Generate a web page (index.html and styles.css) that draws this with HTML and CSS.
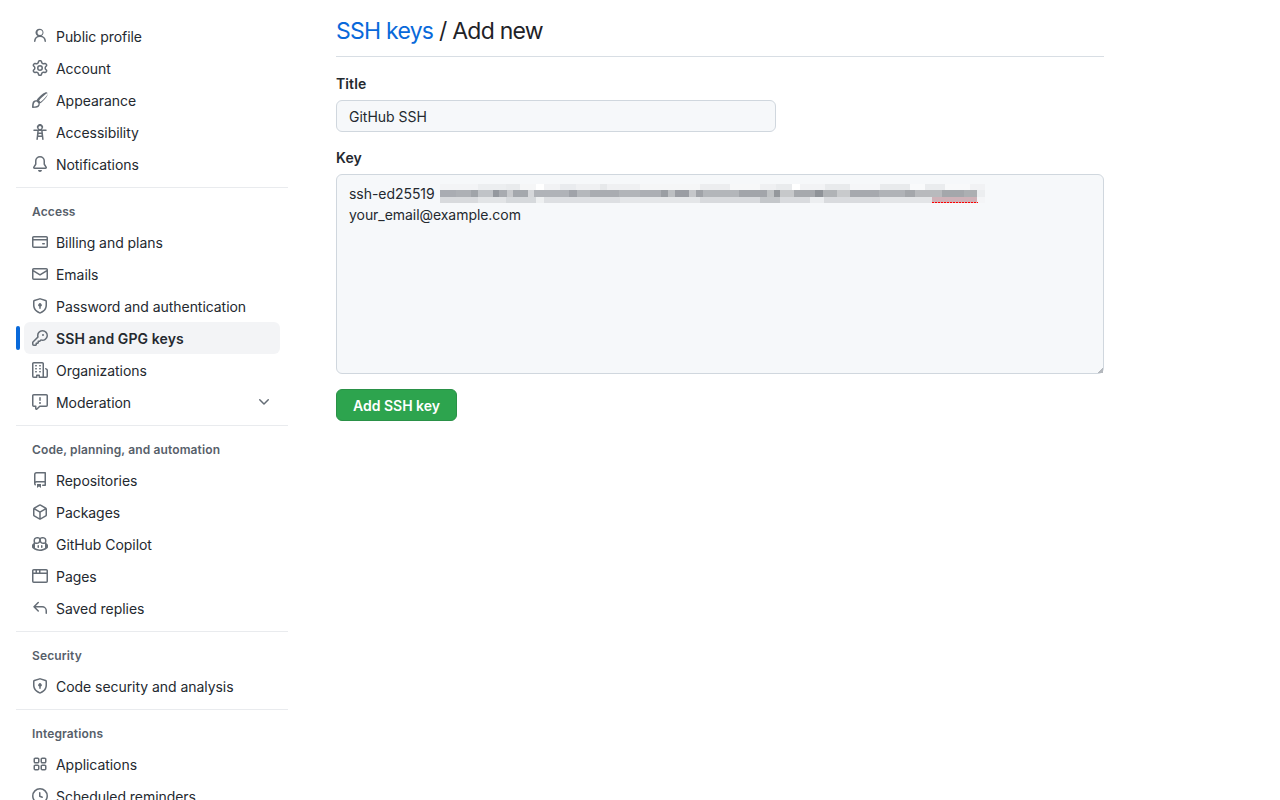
FILE: index.html
```html
<!DOCTYPE html>
<html lang="en">
<head>
<meta charset="utf-8">
<title>Add new SSH key</title>
<link rel="stylesheet" href="styles.css">
</head>
<body>
<nav class="sidebar">
  <ul class="group">
    <li class="item"><svg class="icon" viewBox="0 0 16 16"><path d="M10.561 8.073a6.005 6.005 0 0 1 3.432 5.142.75.75 0 1 1-1.498.07 4.5 4.5 0 0 0-8.99 0 .75.75 0 0 1-1.498-.07 6.004 6.004 0 0 1 3.431-5.142 3.999 3.999 0 1 1 4.123 0ZM10.5 4.5a2.5 2.5 0 1 0-5 0 2.5 2.5 0 0 0 5 0Z"/></svg>Public profile</li>
    <li class="item"><svg class="icon" viewBox="0 0 16 16"><path d="M8 0a8.2 8.2 0 0 1 .701.031C9.444.095 9.99.645 10.16 1.29l.288 1.107c.018.066.079.158.212.224.231.114.454.243.668.386.123.082.233.09.299.071l1.103-.303c.644-.176 1.392.021 1.82.63.27.385.506.792.704 1.218.315.675.111 1.422-.364 1.891l-.814.806c-.049.048-.098.147-.088.294.016.257.016.515 0 .772-.01.147.038.246.088.294l.814.806c.475.469.679 1.216.364 1.891a7.977 7.977 0 0 1-.704 1.217c-.428.61-1.176.807-1.82.63l-1.102-.302c-.067-.019-.177-.011-.3.071a5.909 5.909 0 0 1-.668.386c-.133.066-.194.158-.211.224l-.29 1.106c-.168.646-.715 1.196-1.458 1.26a8.006 8.006 0 0 1-1.402 0c-.743-.064-1.289-.614-1.458-1.26l-.289-1.106c-.018-.066-.079-.158-.212-.224a5.738 5.738 0 0 1-.668-.386c-.123-.082-.233-.09-.299-.071l-1.103.303c-.644.176-1.392-.021-1.82-.63a8.12 8.12 0 0 1-.704-1.218c-.315-.675-.111-1.422.363-1.891l.815-.806c.05-.048.098-.147.088-.294a6.214 6.214 0 0 1 0-.772c.01-.147-.038-.246-.088-.294l-.815-.806C.635 6.045.431 5.298.746 4.623a7.92 7.92 0 0 1 .704-1.217c.428-.61 1.176-.807 1.82-.63l1.102.302c.067.019.177.011.3-.071.214-.143.437-.272.668-.386.133-.066.194-.158.211-.224l.29-1.106C6.009.645 6.556.095 7.299.03 7.53.01 7.764 0 8 0Zm-.571 1.525c-.036.003-.108.036-.137.146l-.289 1.105c-.147.561-.549.967-.998 1.189-.173.086-.34.183-.5.29-.417.278-.97.423-1.529.27l-1.103-.303c-.109-.03-.175.016-.195.045-.22.312-.412.644-.573.99-.014.031-.021.11.059.19l.815.806c.411.406.562.957.53 1.456a4.709 4.709 0 0 0 0 .582c.032.499-.119 1.05-.53 1.456l-.815.806c-.081.08-.073.159-.059.19.162.346.353.677.573.989.02.03.085.076.195.046l1.102-.303c.56-.153 1.113-.008 1.53.27.161.107.328.204.501.29.447.222.85.629.997 1.189l.289 1.105c.029.109.101.143.137.146a6.6 6.6 0 0 0 1.142 0c.036-.003.108-.036.137-.146l.289-1.105c.147-.561.549-.967.998-1.189.173-.086.34-.183.5-.29.417-.278.97-.423 1.529-.27l1.103.303c.109.029.175-.016.195-.045.22-.313.411-.644.573-.99.014-.031.021-.11-.059-.19l-.815-.806c-.411-.406-.562-.957-.53-1.456a4.709 4.709 0 0 0 0-.582c-.032-.499.119-1.05.53-1.456l.815-.806c.081-.08.073-.159.059-.19a6.464 6.464 0 0 0-.573-.989c-.02-.03-.085-.076-.195-.046l-1.102.303c-.56.153-1.113.008-1.53-.27a4.44 4.44 0 0 0-.501-.29c-.447-.222-.85-.629-.997-1.189l-.289-1.105c-.029-.11-.101-.143-.137-.146a6.6 6.6 0 0 0-1.142 0ZM11 8a3 3 0 1 1-6 0 3 3 0 0 1 6 0ZM9.5 8a1.5 1.5 0 1 0-3.001.001A1.5 1.5 0 0 0 9.5 8Z"/></svg>Account</li>
    <li class="item"><svg class="icon" viewBox="0 0 16 16"><path d="M11.134 1.535c.7-.509 1.416-.942 2.076-1.155.649-.21 1.463-.267 2.069.34.603.601.568 1.411.368 2.07-.202.668-.624 1.39-1.125 2.096-1.011 1.424-2.496 2.987-3.775 4.249-1.098 1.084-2.132 1.839-3.04 2.3a3.744 3.744 0 0 1-1.055 3.217c-.431.431-1.065.691-1.657.861-.614.177-1.294.287-1.914.357A21.151 21.151 0 0 1 .797 16H.743l.007-.75H.749L.742 16a.75.75 0 0 1-.743-.742l.743-.008-.742.007v-.054a21.25 21.25 0 0 1 .13-2.284c.067-.647.187-1.287.358-1.914.17-.591.43-1.226.86-1.657a3.746 3.746 0 0 1 3.227-1.054c.466-.893 1.225-1.907 2.314-2.982 1.271-1.255 2.833-2.75 4.245-3.777ZM1.5 14.5c.5-.01 1.002-.04 1.5-.09.567-.064 1.156-.163 1.66-.31.525-.152.88-.33 1.068-.518a2.25 2.25 0 1 0-3.182-3.182c-.19.189-.368.544-.52 1.07-.147.503-.246 1.092-.31 1.66-.05.498-.08 1-.09 1.5Zm5.42-6.057c.6.318 1.2.92 1.482 1.478.79-.419 1.71-1.068 2.71-2.056 1.254-1.238 2.672-2.738 3.607-4.055.47-.66.78-1.22.916-1.669.138-.457.08-.61-.013-.703-.09-.09-.236-.148-.686-.001-.442.143-1 .47-1.657.947-1.3.946-2.792 2.367-4.046 3.605-.96.947-1.598 1.824-1.988 2.552-.12-.04.013-.024-.325-.098Z"/></svg>Appearance</li>
    <li class="item"><svg class="icon" viewBox="0 0 16 16"><path d="M9.923 5.302c.063.063.122.129.178.198H14A.75.75 0 0 1 14 7h-3.3l.578 5.163.362 2.997a.75.75 0 0 1-1.49.18L9.868 13H6.132l-.282 2.34a.75.75 0 0 1-1.49-.18l.362-2.997L5.3 7H2a.75.75 0 0 1 0-1.5h3.9a2.54 2.54 0 0 1 .176-.198 3 3 0 1 1 3.847 0ZM9.2 7.073h-2.4l-.175 1.45h2.75Zm.192 2.95H6.608l-.165 1.477h3.114ZM8 5a1.5 1.5 0 1 0 0-3 1.5 1.5 0 0 0 0 3Z"/></svg>Accessibility</li>
    <li class="item"><svg class="icon" viewBox="0 0 16 16"><path d="M8 16a2 2 0 0 0 1.985-1.75c.017-.137-.097-.25-.235-.25h-3.5c-.138 0-.252.113-.235.25A2 2 0 0 0 8 16ZM3 5a5 5 0 0 1 10 0v2.947c0 .05.015.098.042.139l1.703 2.555A1.519 1.519 0 0 1 13.482 13H2.518a1.516 1.516 0 0 1-1.263-2.36l1.703-2.554A.255.255 0 0 0 3 7.947Zm5-3.5A3.5 3.5 0 0 0 4.5 5v2.947c0 .346-.102.683-.294.97l-1.703 2.556a.017.017 0 0 0-.003.01l.001.006c0 .002.002.004.004.006l.006.004.007.001h10.964l.007-.001.006-.004.004-.006.001-.007a.017.017 0 0 0-.003-.01l-1.703-2.554a1.745 1.745 0 0 1-.294-.97V5A3.5 3.5 0 0 0 8 1.5Z"/></svg>Notifications</li>
  </ul>
  <div class="divider"></div>
  <h3 class="heading">Access</h3>
  <ul class="group">
    <li class="item"><svg class="icon" viewBox="0 0 16 16"><path d="M10.75 9a.75.75 0 0 0 0 1.5h1.5a.75.75 0 0 0 0-1.5h-1.5Z"/><path d="M0 3.75C0 2.784.784 2 1.75 2h12.5c.966 0 1.75.784 1.75 1.75v8.5A1.75 1.75 0 0 1 14.25 14H1.75A1.75 1.75 0 0 1 0 12.25ZM14.5 6.5h-13v5.75c0 .138.112.25.25.25h12.5a.25.25 0 0 0 .25-.25Zm0-2.75a.25.25 0 0 0-.25-.25H1.75a.25.25 0 0 0-.25.25V5h13Z"/></svg>Billing and plans</li>
    <li class="item"><svg class="icon" viewBox="0 0 16 16"><path d="M1.75 2h12.5c.966 0 1.75.784 1.75 1.75v8.5A1.75 1.75 0 0 1 14.25 14H1.75A1.75 1.75 0 0 1 0 12.25v-8.5C0 2.784.784 2 1.75 2ZM1.5 12.251c0 .138.112.25.25.25h12.5a.25.25 0 0 0 .25-.25V5.809L8.38 9.397a.75.75 0 0 1-.76 0L1.5 5.809v6.442Zm13-8.181v-.32a.25.25 0 0 0-.25-.25H1.75a.25.25 0 0 0-.25.25v.32L8 7.88Z"/></svg>Emails</li>
    <li class="item"><svg class="icon" viewBox="0 0 16 16"><path d="M7.467.133a1.748 1.748 0 0 1 1.066 0l5.25 1.68A1.75 1.75 0 0 1 15 3.48V7c0 1.566-.32 3.182-1.303 4.682-.983 1.498-2.585 2.813-5.032 3.855a1.697 1.697 0 0 1-1.33 0c-2.447-1.042-4.049-2.357-5.032-3.855C1.32 10.182 1 8.566 1 7V3.48a1.75 1.75 0 0 1 1.217-1.667Zm.61 1.429a.25.25 0 0 0-.153 0l-5.25 1.68a.25.25 0 0 0-.174.238V7c0 1.358.275 2.666 1.057 3.86.784 1.194 2.121 2.34 4.366 3.297a.196.196 0 0 0 .154 0c2.245-.956 3.582-2.104 4.366-3.298C13.225 9.666 13.5 8.36 13.5 7V3.48a.251.251 0 0 0-.174-.237l-5.25-1.68ZM8.75 8.582v1.668a.75.75 0 0 1-1.5 0V8.582a1.75 1.75 0 1 1 1.5 0Z"/></svg>Password and authentication</li>
    <li class="item active"><svg class="icon" viewBox="0 0 16 16"><path d="M10.5 0a5.499 5.499 0 1 1-1.288 10.848l-.932.932a.749.749 0 0 1-.53.22H7v.75a.749.749 0 0 1-.22.53l-.5.5a.749.749 0 0 1-.53.22H5v.75a.749.749 0 0 1-.22.53l-.5.5a.749.749 0 0 1-.53.22h-2A1.75 1.75 0 0 1 0 14.25v-2c0-.199.079-.389.22-.53l4.932-4.932A5.5 5.5 0 0 1 10.5 0Zm-4 5.5c-.001.431.069.86.205 1.269a.75.75 0 0 1-.181.768L1.5 12.56v1.69c0 .138.112.25.25.25h1.69l.06-.06v-1.19a.75.75 0 0 1 .75-.75h1.19l.06-.06v-1.19a.75.75 0 0 1 .75-.75h1.19l1.023-1.025a.75.75 0 0 1 .768-.18A4 4 0 1 0 6.5 5.5ZM11 6a1 1 0 1 1 0-2 1 1 0 0 1 0 2Z"/></svg>SSH and GPG keys</li>
    <li class="item"><svg class="icon" viewBox="0 0 16 16"><path d="M1.75 16A1.75 1.75 0 0 1 0 14.25V1.75C0 .784.784 0 1.75 0h8.5C11.216 0 12 .784 12 1.75v12.5c0 .085-.006.168-.018.25h2.268a.25.25 0 0 0 .25-.25V8.285a.25.25 0 0 0-.111-.208l-1.055-.703a.749.749 0 1 1 .832-1.248l1.055.703c.487.325.779.871.779 1.456v5.965A1.75 1.75 0 0 1 14.25 16h-3.5a.766.766 0 0 1-.197-.026c-.099.017-.2.026-.303.026h-3a.75.75 0 0 1-.75-.75V14h-1v1.25a.75.75 0 0 1-.75.75Zm-.25-1.75c0 .138.112.25.25.25H4v-1.25a.75.75 0 0 1 .75-.75h2.5a.75.75 0 0 1 .75.75v1.25h2.25a.25.25 0 0 0 .25-.25V1.75a.25.25 0 0 0-.25-.25h-8.5a.25.25 0 0 0-.25.25ZM3.75 6h.5a.75.75 0 0 1 0 1.5h-.5a.75.75 0 0 1 0-1.5ZM3 3.75A.75.75 0 0 1 3.75 3h.5a.75.75 0 0 1 0 1.5h-.5A.75.75 0 0 1 3 3.75Zm4 3A.75.75 0 0 1 7.75 6h.5a.75.75 0 0 1 0 1.5h-.5A.75.75 0 0 1 7 6.75ZM7.75 3h.5a.75.75 0 0 1 0 1.5h-.5a.75.75 0 0 1 0-1.5ZM3 9.75A.75.75 0 0 1 3.75 9h.5a.75.75 0 0 1 0 1.5h-.5A.75.75 0 0 1 3 9.75ZM7.75 9h.5a.75.75 0 0 1 0 1.5h-.5a.75.75 0 0 1 0-1.5Z"/></svg>Organizations</li>
    <li class="item"><svg class="icon" viewBox="0 0 16 16"><path d="M0 1.75C0 .784.784 0 1.75 0h12.5C15.216 0 16 .784 16 1.75v9.5A1.75 1.75 0 0 1 14.25 13H8.06l-2.573 2.573A1.458 1.458 0 0 1 3 14.543V13H1.75A1.75 1.75 0 0 1 0 11.25Zm1.75-.25a.25.25 0 0 0-.25.25v9.5c0 .138.112.25.25.25h2a.75.75 0 0 1 .75.75v2.19l2.72-2.72a.749.749 0 0 1 .53-.22h6.5a.25.25 0 0 0 .25-.25v-9.5a.25.25 0 0 0-.25-.25Zm7 2.25v2.5a.75.75 0 0 1-1.5 0v-2.5a.75.75 0 0 1 1.5 0ZM9 9a1 1 0 1 1-2 0 1 1 0 0 1 2 0Z"/></svg>Moderation<svg class="icon chevron" viewBox="0 0 16 16"><path d="M12.78 5.22a.749.749 0 0 1 0 1.06l-4.25 4.25a.749.749 0 0 1-1.06 0L3.22 6.28a.749.749 0 1 1 1.06-1.06L8 8.939l3.72-3.719a.749.749 0 0 1 1.06 0Z"/></svg></li>
  </ul>
  <div class="divider"></div>
  <h3 class="heading">Code, planning, and automation</h3>
  <ul class="group">
    <li class="item"><svg class="icon" viewBox="0 0 16 16"><path d="M2 2.5A2.5 2.5 0 0 1 4.5 0h8.75a.75.75 0 0 1 .75.75v12.5a.75.75 0 0 1-.75.75h-2.5a.75.75 0 0 1 0-1.5h1.75v-2h-8a1 1 0 0 0-.714 1.7.75.75 0 1 1-1.072 1.05A2.495 2.495 0 0 1 2 11.5Zm10.5-1h-8a1 1 0 0 0-1 1v6.708A2.486 2.486 0 0 1 4.5 9h8ZM5 12.25a.25.25 0 0 1 .25-.25h3.5a.25.25 0 0 1 .25.25v3.25a.25.25 0 0 1-.4.2l-1.45-1.087a.249.249 0 0 0-.3 0L5.4 15.7a.25.25 0 0 1-.4-.2Z"/></svg>Repositories</li>
    <li class="item"><svg class="icon" viewBox="0 0 16 16"><path d="m8.878.392 5.25 3.045c.54.314.872.89.872 1.514v6.098a1.75 1.75 0 0 1-.872 1.514l-5.25 3.045a1.75 1.75 0 0 1-1.756 0l-5.25-3.045A1.75 1.75 0 0 1 1 11.049V4.951c0-.624.332-1.201.872-1.514L7.122.392a1.75 1.75 0 0 1 1.756 0ZM7.875 1.69l-4.63 2.685L8 7.133l4.755-2.758-4.63-2.685a.248.248 0 0 0-.25 0ZM2.5 5.677v5.372c0 .09.047.171.125.216l4.625 2.683V8.432Zm6.25 8.271 4.625-2.683a.25.25 0 0 0 .125-.216V5.677L8.75 8.432Z"/></svg>Packages</li>
    <li class="item"><svg class="icon" viewBox="0 0 16 16"><path d="M7.998 15.035c-4.562 0-7.873-2.914-7.998-3.749V9.338c.085-.628.677-1.686 1.588-2.065.013-.07.024-.143.036-.218.029-.183.06-.384.126-.612-.201-.508-.254-1.084-.254-1.656 0-.87.128-1.769.693-2.484.579-.733 1.494-1.124 2.724-1.261 1.206-.134 2.262.034 2.944.765.05.053.096.108.139.165.044-.057.094-.112.143-.165.682-.731 1.738-.899 2.944-.765 1.23.137 2.145.528 2.724 1.261.566.715.693 1.614.693 2.484 0 .572-.053 1.148-.254 1.656.066.228.098.429.126.612.012.076.024.148.037.218.924.385 1.522 1.471 1.591 2.095v1.872c0 .766-3.351 3.795-8.002 3.795Zm0-1.485c2.28 0 4.584-1.11 5.002-1.433V7.862l-.023-.116c-.49.21-1.075.291-1.727.291-1.146 0-2.059-.327-2.71-.991A3.222 3.222 0 0 1 8 6.303a3.24 3.24 0 0 1-.544.743c-.65.664-1.563.991-2.71.991-.652 0-1.236-.081-1.727-.291l-.023.116v4.255c.419.323 2.722 1.433 5.002 1.433ZM6.762 2.83c-.193-.206-.637-.413-1.682-.297-1.019.113-1.479.404-1.713.7-.247.312-.369.789-.369 1.554 0 .793.129 1.171.308 1.371.162.181.519.379 1.442.379.853 0 1.339-.235 1.638-.54.315-.322.527-.827.617-1.553.117-.935-.037-1.395-.241-1.614Zm4.155-.297c-1.044-.116-1.488.091-1.681.297-.204.219-.359.679-.242 1.614.091.726.303 1.231.618 1.553.299.305.784.54 1.638.54.922 0 1.28-.198 1.442-.379.179-.2.308-.578.308-1.371 0-.765-.123-1.242-.37-1.554-.233-.296-.693-.587-1.713-.7Z"/><path d="M6.25 9.037a.75.75 0 0 1 .75.75v1.501a.75.75 0 0 1-1.5 0V9.787a.75.75 0 0 1 .75-.75Zm4.25.75v1.501a.75.75 0 0 1-1.5 0V9.787a.75.75 0 0 1 1.5 0Z"/></svg>GitHub Copilot</li>
    <li class="item"><svg class="icon" viewBox="0 0 16 16"><path d="M0 2.75C0 1.784.784 1 1.75 1h12.5c.966 0 1.75.784 1.75 1.75v10.5A1.75 1.75 0 0 1 14.25 15H1.75A1.75 1.75 0 0 1 0 13.25ZM14.5 6h-13v7.25c0 .138.112.25.25.25h12.5a.25.25 0 0 0 .25-.25Zm-6-3.5v2h6V2.75a.25.25 0 0 0-.25-.25ZM5 2.5v2h2v-2Zm-3.25 0a.25.25 0 0 0-.25.25V4.5h2v-2Z"/></svg>Pages</li>
    <li class="item"><svg class="icon" viewBox="0 0 16 16"><path d="M6.78 1.97a.75.75 0 0 1 0 1.06L3.81 6h6.44A4.75 4.75 0 0 1 15 10.75v2.5a.75.75 0 0 1-1.5 0v-2.5a3.25 3.25 0 0 0-3.25-3.25H3.81l2.97 2.97a.749.749 0 0 1-.326 1.275.749.749 0 0 1-.734-.215L1.47 7.28a.75.75 0 0 1 0-1.06l4.25-4.25a.75.75 0 0 1 1.06 0Z"/></svg>Saved replies</li>
  </ul>
  <div class="divider"></div>
  <h3 class="heading">Security</h3>
  <ul class="group">
    <li class="item"><svg class="icon" viewBox="0 0 16 16"><path d="M7.467.133a1.748 1.748 0 0 1 1.066 0l5.25 1.68A1.75 1.75 0 0 1 15 3.48V7c0 1.566-.32 3.182-1.303 4.682-.983 1.498-2.585 2.813-5.032 3.855a1.697 1.697 0 0 1-1.33 0c-2.447-1.042-4.049-2.357-5.032-3.855C1.32 10.182 1 8.566 1 7V3.48a1.75 1.75 0 0 1 1.217-1.667Zm.61 1.429a.25.25 0 0 0-.153 0l-5.25 1.68a.25.25 0 0 0-.174.238V7c0 1.358.275 2.666 1.057 3.86.784 1.194 2.121 2.34 4.366 3.297a.196.196 0 0 0 .154 0c2.245-.956 3.582-2.104 4.366-3.298C13.225 9.666 13.5 8.36 13.5 7V3.48a.251.251 0 0 0-.174-.237l-5.25-1.68ZM8.75 8.582v1.668a.75.75 0 0 1-1.5 0V8.582a1.75 1.75 0 1 1 1.5 0Z"/></svg>Code security and analysis</li>
  </ul>
  <div class="divider"></div>
  <h3 class="heading">Integrations</h3>
  <ul class="group">
    <li class="item"><svg class="icon" viewBox="0 0 16 16"><path d="M1.5 3.25c0-.966.784-1.75 1.75-1.75h2.5c.966 0 1.75.784 1.75 1.75v2.5A1.75 1.75 0 0 1 5.75 7.5h-2.5A1.75 1.75 0 0 1 1.5 5.75Zm7 0c0-.966.784-1.75 1.75-1.75h2.5c.966 0 1.75.784 1.75 1.75v2.5a1.75 1.75 0 0 1-1.75 1.75h-2.5A1.75 1.75 0 0 1 8.5 5.75Zm-7 7c0-.966.784-1.75 1.75-1.75h2.5c.966 0 1.75.784 1.75 1.75v2.5a1.75 1.75 0 0 1-1.75 1.75h-2.5a1.75 1.75 0 0 1-1.75-1.75Zm7 0c0-.966.784-1.75 1.75-1.75h2.5c.966 0 1.75.784 1.75 1.75v2.5a1.75 1.75 0 0 1-1.75 1.75h-2.5a1.75 1.75 0 0 1-1.75-1.75ZM3.25 3a.25.25 0 0 0-.25.25v2.5c0 .138.112.25.25.25h2.5A.25.25 0 0 0 6 5.75v-2.5A.25.25 0 0 0 5.75 3Zm7 0a.25.25 0 0 0-.25.25v2.5c0 .138.112.25.25.25h2.5a.25.25 0 0 0 .25-.25v-2.5a.25.25 0 0 0-.25-.25Zm-7 7a.25.25 0 0 0-.25.25v2.5c0 .138.112.25.25.25h2.5a.25.25 0 0 0 .25-.25v-2.5a.25.25 0 0 0-.25-.25Zm7 0a.25.25 0 0 0-.25.25v2.5c0 .138.112.25.25.25h2.5a.25.25 0 0 0 .25-.25v-2.5a.25.25 0 0 0-.25-.25Z"/></svg>Applications</li>
    <li class="item"><svg class="icon" viewBox="0 0 16 16"><path d="M8 0a8 8 0 1 1 0 16A8 8 0 0 1 8 0ZM1.5 8a6.5 6.5 0 1 0 13 0 6.5 6.5 0 0 0-13 0Zm7-3.25v2.992l2.028.812a.75.75 0 0 1-.557 1.392l-2.5-1A.751.751 0 0 1 7 8.25v-3.5a.75.75 0 0 1 1.5 0Z"/></svg>Scheduled reminders</li>
  </ul>
</nav>
<main class="content">
  <h2 class="title"><a class="title-link" href="#">SSH keys</a> / Add new</h2>
  <form class="form">
    <div class="field">
      <label class="label" for="title">Title</label>
      <input class="input" id="title" type="text" value="GitHub SSH" spellcheck="false">
    </div>
    <div class="field">
      <label class="label" for="key">Key</label>
      <div class="key-wrap">
        <textarea class="input keybox" id="key" spellcheck="false">ssh-ed25519
your_email@example.com</textarea>
        <div class="mosaic" aria-hidden="true">
          <div class="mosaic-top"></div>
          <div class="mosaic-mid"></div>
          <div class="mosaic-bottom"></div>
        </div>
        <div class="squiggle" aria-hidden="true"></div>
      </div>
    </div>
    <button class="submit" type="button">Add SSH key</button>
  </form>
</main>
</body>
</html>
```
FILE: styles.css
```css
* { box-sizing: border-box; }
html, body { height: 100%; }
body {
  margin: 0;
  height: 800px;
  overflow: hidden;
  display: flex;
  background: #fff;
  color: #24292f;
  font-family: Inter, "Liberation Sans", sans-serif;
  font-size: 14px;
}
.sidebar {
  flex: 0 0 272px;
  margin-left: 16px;
  padding-top: 20px;
}
.group { list-style: none; margin: 0; padding: 0 8px; }
.item {
  position: relative;
  display: flex;
  align-items: center;
  gap: 8px;
  height: 32px;
  padding: 0 8px;
  border-radius: 6px;
  letter-spacing: -0.05px;
}
.item.active { background: #f3f4f6; font-weight: 600; letter-spacing: 0.1px; }
.item.active::before {
  content: "";
  position: absolute;
  left: -8px;
  top: 4px;
  width: 4px;
  height: 24px;
  border-radius: 2px;
  background: #0969da;
}
.icon { width: 16px; height: 16px; flex: none; fill: #656d76; }
.chevron { margin-left: auto; }
.divider { height: 1px; margin: 7px 0 14px; background: #e9ebee; }
.heading {
  margin: 0 0 4px;
  padding-left: 16px;
  font-size: 12px;
  font-weight: 600;
  line-height: 20px;
  letter-spacing: 0.13px;
  color: #57606a;
}
.content { flex: 0 0 768px; margin-left: 48px; padding-top: 13px; }
.title {
  margin: 0;
  padding-bottom: 7px;
  border-bottom: 1px solid #d8dee4;
  font-size: 23px;
  font-weight: 400;
  line-height: 36px;
  letter-spacing: -0.75px;
  color: #1f2328;
}
.title-link { color: #0969da; text-decoration: none; }
.form { display: flex; flex-direction: column; align-items: flex-start; gap: 16px; padding-top: 17px; }
.field { display: flex; flex-direction: column; align-items: flex-start; gap: 6px; width: 100%; }
.label { font-weight: 600; line-height: 20px; letter-spacing: 0.1px; }
.input {
  display: block;
  width: 440px;
  height: 32px;
  padding: 5px 12px;
  border: 1px solid #d0d7de;
  border-radius: 6px;
  background: #f6f8fa;
  color: #24292f;
  font: 14px/20px Inter, "Liberation Sans", sans-serif;
  outline: none;
}
.key-wrap { position: relative; width: 768px; }
.keybox {
  width: 768px;
  height: 200px;
  padding: 8px 12px;
  line-height: 21px;
  letter-spacing: -0.05px;
  resize: vertical;
}
.keybox::-webkit-resizer {
  background: linear-gradient(135deg, transparent 0 82%, #b4b8bd 82% 100%);
}
.mosaic { position: absolute; left: 104px; top: 10px; width: 545px; height: 19px; filter: blur(0.7px); }
.mosaic-top {
  height: 6px;
  background: linear-gradient(90deg,
    #f3f4f6 0 38px, #eceef0 0 66px, #e9ebed 0 80px, #f5f6f7 0 96px, #ffffff 0 104px,
    #f1f2f4 0 120px, #e9ebee 0 136px, #eff0f2 0 160px, #e6e8ea 0 167px, #eff0f2 0 200px,
    #f5f6f7 0 260px, #ecedef 0 290px, #f7f8f9 0 320px, #eff0f2 0 336px, #e9ebed 0 352px,
    #ffffff 0 360px, #f2f3f5 0 385px, #e8eaec 0 410px, #f5f6f8 0 440px, #e8eaec 0 470px,
    #f9fafb 0 485px, #eaecee 0 505px, #f8f9fa 0 530px, #f1f2f4 0 545px);
}
.mosaic-mid {
  height: 7px;
  background: linear-gradient(90deg,
    #a9acb2 0 16px, #adb0b5 0 31px, #a0a4a9 0 38px, #c0c3c7 0 53px, #94989e 0 59px,
    #a8abb0 0 67px, #c8cacd 0 73px, #a4a8ad 0 88px, #d5d7da 0 94px, #b0b3b8 0 129px,
    #a0a3a9 0 137px, #b5b8bc 0 150px, #a9acb1 0 179px, #b2b5b9 0 200px, #acafb4 0 221px,
    #9a9ea3 0 228px, #bcbfc2 0 235px, #9a9da3 0 249px, #c5c7ca 0 256px, #a0a3a8 0 263px,
    #b3b6ba 0 299px, #a2a5aa 0 327px, #bfc2c4 0 334px, #94989c 0 340px, #c6c8ca 0 354px,
    #a6a9ad 0 375px, #8f9398 0 383px, #b0b3b6 0 397px, #c8cacc 0 410px, #a6a9ae 0 439px,
    #b0b3b7 0 465px, #a4a7ab 0 475px, #b8babd 0 502px, #a4a7ab 0 524px, #acafb2 0 537px,
    #eceef0 0 545px);
}
.mosaic-bottom {
  height: 6px;
  background: linear-gradient(90deg,
    #d8dadd 0 38px, #e2e4e6 0 66px, #d6d9dc 0 96px, #eef0f1 0 104px, #dddfe2 0 180px,
    #e4e6e8 0 260px, #d8dadd 0 320px, #c4c7ca 0 340px, #d9dbde 0 370px, #eceef0 0 384px,
    #d9dbde 0 440px, #e3e5e7 0 492px, #cfb2b8 0 537px, #f4f5f7 0 545px);
}
.squiggle {
  position: absolute;
  left: 596px;
  top: 28px;
  width: 46px;
  height: 1px;
  background: repeating-linear-gradient(90deg, #f00 0 2px, transparent 2px 3px);
}
.submit {
  margin-top: -1px;
  width: 121px;
  height: 32px;
  padding: 1px 0 0;
  border: 1px solid #2a9147;
  border-radius: 6px;
  background: #2da44e;
  color: #fff;
  font: 600 14px/20px Inter, "Liberation Sans", sans-serif;
}
```
